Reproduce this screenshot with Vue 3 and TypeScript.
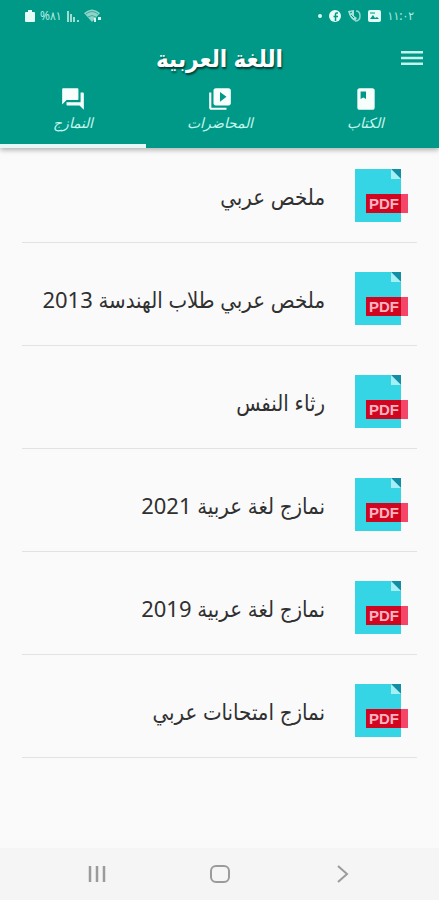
<script setup lang="ts">
import { ref } from 'vue'

interface Tab {
  id: string
  label: string
  icon: string
}

const tabs: Tab[] = [
  {
    id: 'book',
    label: 'الكتاب',
    icon: 'M18 2H6C4.900 2 4 2.900 4 4v16c0 1.100.900 2 2 2h12c1.100 0 2-.900 2-2V4c0-1.100-.900-2-2-2zM7 5h5v7l-2.500-1.500L7 12z',
  },
  {
    id: 'lectures',
    label: 'المحاضرات',
    icon: 'M4 6H2v14c0 1.100.900 2 2 2h14v-2H4V6zm16-4H8c-1.100 0-2 .900-2 2v12c0 1.100.900 2 2 2h12c1.100 0 2-.900 2-2V4c0-1.100-.900-2-2-2zm-8 12.500v-9l6 4.500-6 4.500z',
  },
  {
    id: 'samples',
    label: 'النمازج',
    icon: 'M21 6h-2v9H6v2c0 .550.450 1 1 1h11l4 4V7c0-.550-.450-1-1-1zm-4 6V3c0-.550-.450-1-1-1H3c-.550 0-1 .450-1 1v14l4-4h10c.550 0 1-.450 1-1z',
  },
]

const activeTab = ref<string>('samples')

const files: string[] = [
  'ملخص عربي',
  'ملخص عربي طلاب الهندسة 2013',
  'رثاء النفس',
  'نمازج لغة عربية 2021',
  'نمازج لغة عربية 2019',
  'نمازج امتحانات عربي',
]
</script>

<template>
  <div class="screen" dir="rtl" lang="ar">
    <header class="header">
      <div class="status" dir="ltr">
        <div class="status-group">
          <svg width="10" height="12" viewBox="0 0 10 12" fill="#e4fbf6" aria-hidden="true">
            <path d="M3 0h4v2h2q1 0 1 1v8q0 1-1 1H1q-1 0-1-1V3q0-1 1-1h2z" />
          </svg>
          <span class="status-text">%٨١</span>
          <svg width="12" height="12" viewBox="0 0 12 12" fill="#9fdcd2" aria-hidden="true">
            <path d="M0 1h2v11H0zM3 4h2v8H3zM6 7h2v5H6zM10 10h2v2h-2z" />
          </svg>
          <svg width="18" height="14" viewBox="0 0 18 14" aria-hidden="true">
            <path d="M0 4Q8-3 16 4L8 13z" fill="#8fd3c9" />
            <path d="M2 5q6-5 12 0M4 8q4-3 8 0" fill="none" stroke="#3fac9e" />
            <path d="M10 9h2v4h-2zM14 8h3v3h-3z" fill="#cff5ee" />
          </svg>
        </div>
        <div class="status-group">
          <svg width="4" height="4" viewBox="0 0 4 4" aria-hidden="true"><circle cx="2" cy="2" r="2" fill="#d5f7f0" /></svg>
          <svg width="12" height="12" viewBox="0 0 12 12" aria-hidden="true">
            <circle cx="6" cy="6" r="6" fill="#e4fbf6" />
            <path d="M9 3H7.500Q6.500 3 6.500 4v7M4.500 6.500H9" fill="none" stroke="#009987" stroke-width="1.500" />
          </svg>
          <svg width="13" height="12" viewBox="0 0 13 12" fill="none" aria-hidden="true">
            <path d="M8 1q4 0 4 5t-5 5" stroke="#8fd8cd" stroke-width="1.500" />
            <path d="M0 1l6-1v6l3 2-2 3Q2 9 0 1z" fill="#a6e2d8" />
            <path d="M2 3l2-1M3 5l3 3" stroke="#009987" />
          </svg>
          <svg width="13" height="12" viewBox="0 0 13 12" aria-hidden="true">
            <rect width="13" height="12" rx="2" fill="#e4fbf6" />
            <path d="M2 9l3-4 2 3 2-1 2 2z" fill="#009987" />
            <path d="M2 3h5" stroke="#009987" />
          </svg>
          <span class="status-text">١١:٠٢</span>
        </div>
      </div>

      <div class="title-bar">
        <button class="menu" type="button" aria-label="القائمة">
          <svg width="22" height="14" viewBox="0 0 22 14" fill="#c4f6ee" aria-hidden="true">
            <path d="M0 0h22v2.500H0zM0 5.750h22v2.500H0zM0 11.500h22V14H0z" />
          </svg>
        </button>
        <h1 class="title">اللغة العربية</h1>
      </div>

      <nav class="tabs">
        <button
          v-for="tab in tabs"
          :key="tab.id"
          type="button"
          class="tab"
          :class="{ active: tab.id === activeTab }"
          @click="activeTab = tab.id"
        >
          <svg width="26" height="26" viewBox="0 0 24 24" fill="#f7fffd" aria-hidden="true">
            <path :d="tab.icon" fill-rule="evenodd" />
          </svg>
          <span class="tab-label">{{ tab.label }}</span>
        </button>
      </nav>
    </header>

    <main class="content">
      <ul class="files">
        <li v-for="file in files" :key="file" class="file">
          <svg width="53" height="53" viewBox="0 0 53 53" aria-hidden="true">
            <path d="M0 0h46v53H0z" fill="#36d5e5" />
            <path d="M36 0h10v10z" fill="#128da4" />
            <path d="M36 0v10h10z" fill="#a5eff5" />
            <path d="M11 25h35v19H11z" fill="#d00620" />
            <path d="M46 25h7v19h-7z" fill="#f34668" />
            <text x="14" y="40" class="pdf-text">PDF</text>
          </svg>
          <a class="file-name" href="#">{{ file }}</a>
        </li>
      </ul>
    </main>

    <footer class="system-nav" dir="ltr">
      <button type="button" aria-label="التطبيقات الأخيرة">
        <svg width="20" height="18" viewBox="0 0 20 18" fill="none" stroke="#9b9b9b" stroke-width="2.500" aria-hidden="true">
          <path d="M3 1v16M10 1v16M17 1v16" />
        </svg>
      </button>
      <button type="button" aria-label="الرئيسية">
        <svg width="20" height="18" viewBox="0 0 20 18" fill="none" stroke="#9b9b9b" stroke-width="2" aria-hidden="true">
          <rect x="1" y="1" width="18" height="16" rx="5" />
        </svg>
      </button>
      <button type="button" aria-label="رجوع">
        <svg width="20" height="18" viewBox="0 0 20 18" fill="none" stroke="#9b9b9b" stroke-width="2" aria-hidden="true">
          <path d="M5 1l9 8-9 8" />
        </svg>
      </button>
    </footer>
  </div>
</template>

<style>
body {
  background: #fafafa;
}
</style>

<style scoped>
.screen {
  display: flex;
  flex-direction: column;
  min-height: 100vh;
  background: #fafafa;
  font-family: 'Noto Sans', 'DejaVu Sans Condensed', 'DejaVu Sans', sans-serif;
}

button {
  padding: 0;
  border: 0;
  background: none;
  font: inherit;
  cursor: pointer;
}

svg {
  display: block;
  flex: none;
}

.header {
  background: #009987;
  box-shadow: 0 2px 5px rgba(0, 0, 0, 0.3);
}

.status {
  display: flex;
  justify-content: space-between;
  align-items: center;
  height: 32px;
  padding: 0 25px;
}

.status-group {
  display: flex;
  align-items: center;
  gap: 7px;
}

.status-text {
  color: #b5ebe2;
  font-size: 12px;
  line-height: 16px;
}

.status-group:first-child {
  gap: 5px;
}

.title-bar {
  display: grid;
  grid-template-columns: 1fr auto 1fr;
  align-items: center;
  height: 52px;
  padding: 0 16px;
}

.menu {
  justify-self: start;
}

.title {
  margin: 0;
  color: #fff;
  font-size: 24px;
  font-weight: 700;
  line-height: 32px;
  text-shadow: 1px 2px 2px rgba(0, 0, 0, 0.6);
}

.tabs {
  display: grid;
  grid-template-columns: repeat(3, 1fr);
}

.tab {
  display: flex;
  flex-direction: column;
  align-items: center;
  height: 64px;
  padding-top: 2px;
  border-bottom: 4px solid transparent;
}

.tab.active {
  border-bottom-color: #e6f8f6;
}

.tab-label {
  color: #c4f6ee;
  font-size: 14px;
  font-style: italic;
  line-height: 22px;
}

.content {
  flex: 1;
  padding: 21px 22px;
}

.files {
  display: flex;
  flex-direction: column;
  gap: 29px;
  margin: 0;
  padding: 0;
  list-style: none;
}

.file {
  display: flex;
  align-items: center;
  gap: 30px;
  padding: 0 9px 20px;
  border-bottom: 1px solid #e2e2e2;
}

.pdf-text {
  fill: #ffb3c0;
  font-family: 'Liberation Sans', sans-serif;
  font-size: 15px;
  font-weight: 700;
  direction: ltr;
}

.file-name {
  color: #303030;
  font-size: 22px;
  line-height: 32px;
  text-decoration: none;
  white-space: nowrap;
}

.system-nav {
  display: grid;
  grid-template-columns: repeat(3, 1fr);
  height: 52px;
  padding: 0 35px;
  background: #f5f5f5;
}

.system-nav button {
  display: flex;
  align-items: center;
  justify-content: center;
}
</style>
